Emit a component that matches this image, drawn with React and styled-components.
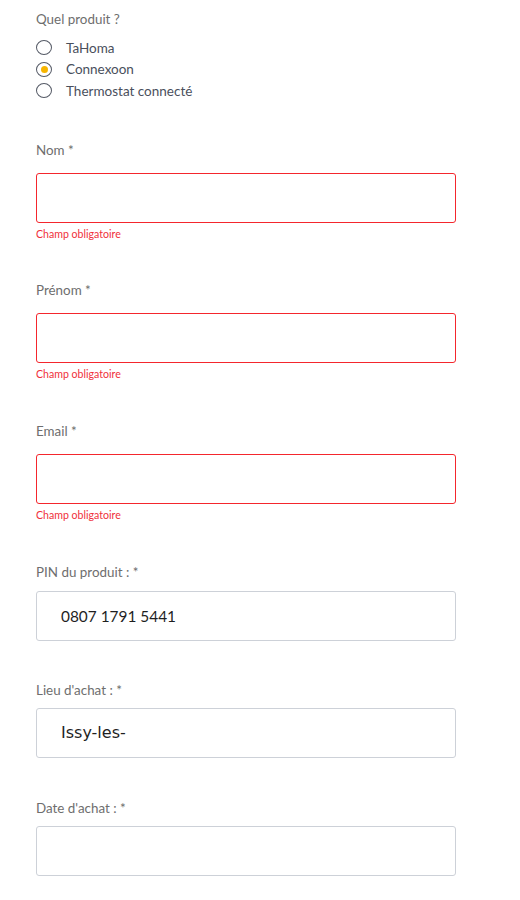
import React from 'react'
import styled, { createGlobalStyle } from 'styled-components'

const GlobalStyle = createGlobalStyle`
  body {
    margin: 0;
    background: #fff;
    font-family: Lato, "Open Sans", sans-serif;
  }
`

const Form = styled.form`
  padding: 11px 0 0 36px;
  width: 420px;
`

const Field = styled.div`
  margin-bottom: ${p => p.$after}px;
`

const Label = styled.div`
  font-size: 13.4px;
  line-height: 17px;
  color: #6e6e6e;
  margin-bottom: ${p => p.$gap}px;
`

const RadioList = styled.div`
  display: flex;
  flex-direction: column;
`

const RadioRow = styled.label`
  display: flex;
  align-items: center;
  height: 21.5px;
  font-size: 13.5px;
  color: #4a4f5c;
`

const Circle = styled.span`
  box-sizing: border-box;
  width: 16px;
  height: 15px;
  border: 1px solid #555a66;
  border-radius: 50%;
  display: flex;
  align-items: center;
  justify-content: center;
  margin-right: 14px;
  &::after {
    content: '';
    display: ${p => (p.$checked ? 'block' : 'none')};
    width: 7px;
    height: 7px;
    border-radius: 50%;
    background: #f7b500;
  }
`

const Input = styled.div`
  box-sizing: border-box;
  width: 420px;
  height: 50px;
  border: 1px solid ${p => (p.$error ? '#f4262d' : '#cdd1d8')};
  border-radius: 3px;
  padding: 0 24px;
  display: flex;
  align-items: center;
  font-family: ${p => (p.$alt ? '"DejaVu Sans", sans-serif' : 'inherit')};
  font-size: ${p => (p.$alt ? 16 : 15.4)}px;
  color: #1f1f1f;
`

const ErrorText = styled.div`
  font-size: 10.6px;
  line-height: 13px;
  color: #f0303a;
  margin-top: 5px;
`

const products = [
  { name: 'TaHoma' },
  { name: 'Connexoon', checked: true },
  { name: 'Thermostat connecté' },
]

const fields = [
  { label: 'Nom *', error: true, gap: 14, after: 41 },
  { label: 'Prénom *', error: true, gap: 14, after: 42 },
  { label: 'Email *', error: true, gap: 14, after: 42 },
  { label: 'PIN du produit : *', value: '0807 1791 5441', gap: 10, after: 41 },
  { label: "Lieu d'achat : *", value: 'Issy-les-', alt: true, gap: 9, after: 42 },
  { label: "Date d'achat : *", value: '', gap: 9, after: 24 },
]

export default function App() {
  return (
    <>
      <GlobalStyle />
      <Form>
        <Field $after={40}>
          <Label $gap={9}>Quel produit ?</Label>
          <RadioList>
            {products.map(p => (
              <RadioRow key={p.name}>
                <Circle $checked={p.checked} />
                {p.name}
              </RadioRow>
            ))}
          </RadioList>
        </Field>
        {fields.map(f => (
          <Field key={f.label} $after={f.after}>
            <Label $gap={f.gap}>{f.label}</Label>
            <Input $error={f.error} $alt={f.alt}>{f.value}</Input>
            {f.error && <ErrorText>Champ obligatoire</ErrorText>}
          </Field>
        ))}
      </Form>
    </>
  )
}
